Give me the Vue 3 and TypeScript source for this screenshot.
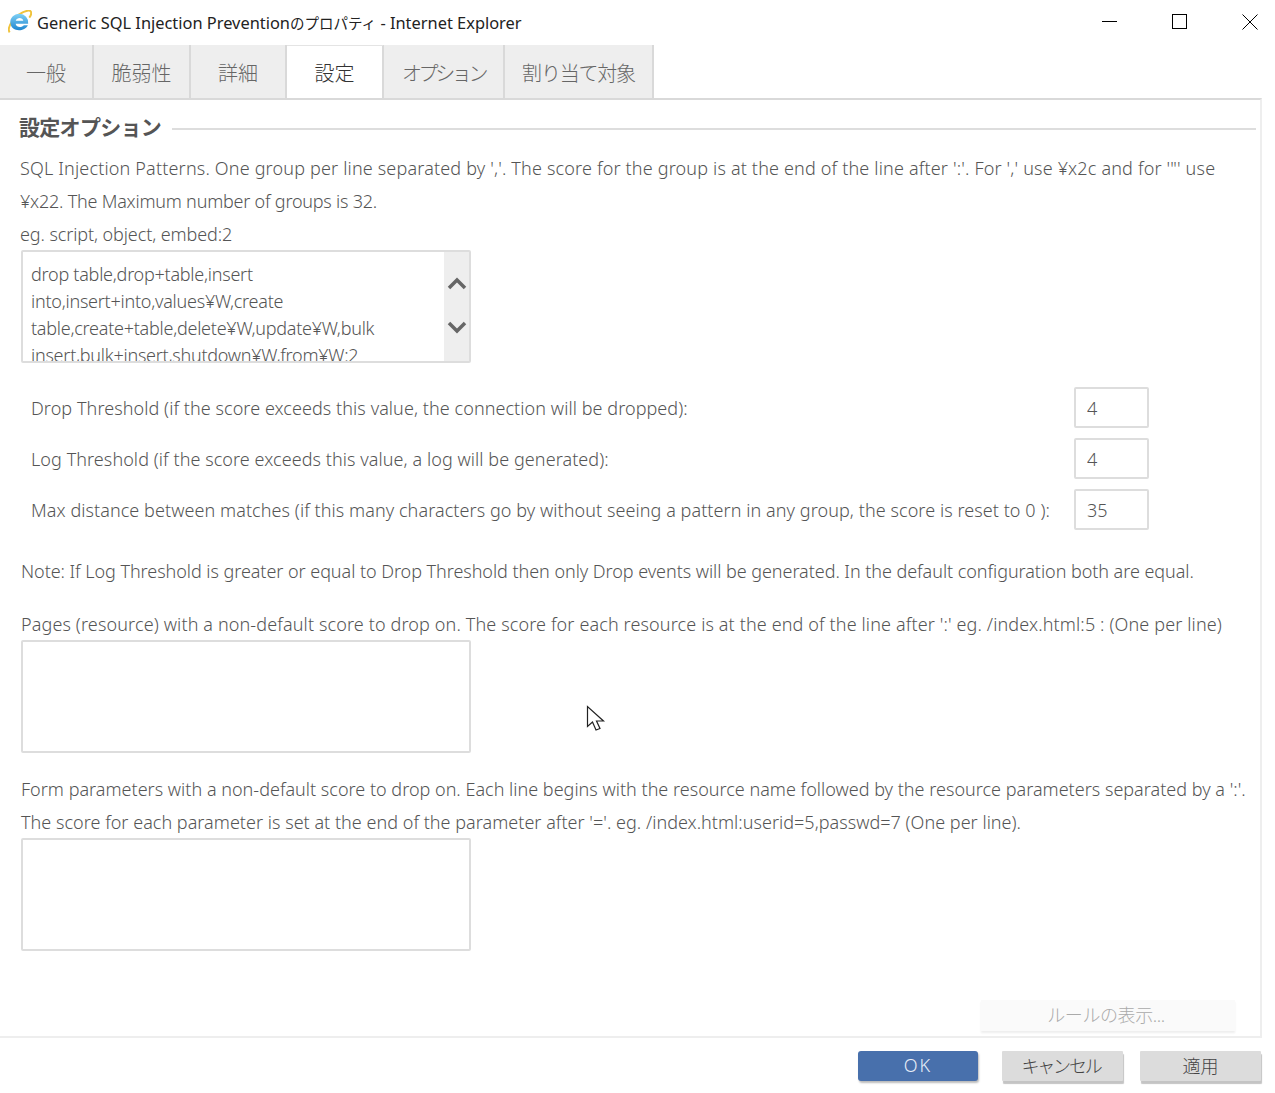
<script setup lang="ts">
const tabs = [
  { label: '一般', width: 94, tracking: 0 },
  { label: '脆弱性', width: 97, tracking: 0 },
  { label: '詳細', width: 96, tracking: 0 },
  { label: '設定', width: 97, tracking: 0 },
  { label: 'オプション', width: 121, tracking: -3.400 },
  { label: '割り当て対象', width: 149, tracking: -1.200 },
]
const thresholds = [
  { label: 'Drop Threshold (if the score exceeds this value, the connection will be dropped):', value: '4' },
  { label: 'Log Threshold (if the score exceeds this value, a log will be generated):', value: '4' },
  { label: 'Max distance between matches (if this many characters go by without seeing a pattern in any group, the score is reset to 0 ):', value: '35' },
]
</script>

<template>
  <div class="win">
    <header class="titlebar">
      <svg class="ie" viewBox="1.500 1 22 22" width="24" height="24">
        <defs>
          <linearGradient id="eg" x1="0" y1="0" x2="0" y2="1">
            <stop offset="0" stop-color="#7fd0f5" />
            <stop offset="1" stop-color="#1f86cf" />
          </linearGradient>
        </defs>
        <path d="M3 21.500 C0 17 8 4 20 1.500 C23.500 1 23.500 5 21 8" fill="none" stroke="#f0c33c" stroke-width="1.800" />
        <path d="M12 4.500a8 8 0 0 1 8 9h-11.500c.6 3.400 5.400 4 7.500 1.400h3.700c-3 6.500-15.200 6.500-16-1.900C3 8.500 7 4.500 12 4.500z M8.600 10.800h6.900c-.5-3.300-6-3.300-6.900 0z" fill="url(#eg)" fill-rule="evenodd" />
      </svg>
      <span class="title">Generic SQL Injection Prevention<span class="title-ja">のプロパティ</span> - Internet Explorer</span>
      <div class="controls">
        <svg width="16" height="16" viewBox="0 0 16 16"><path d="M0 7.500h15" stroke="#000" /></svg>
        <svg width="16" height="16" viewBox="0 0 16 16"><rect x=".5" y=".5" width="14" height="14" fill="none" stroke="#000" /></svg>
        <svg width="16" height="16" viewBox="0 0 16 16"><path d="M.5.500l15 15M15.500.500l-15 15" stroke="#000" /></svg>
      </div>
    </header>

    <nav class="tabs">
      <div
        v-for="(t, i) in tabs"
        :key="t.label"
        class="tab"
        :class="{ active: i === 3 }"
        :style="{ width: t.width + 'px', letterSpacing: t.tracking + 'px' }"
      >{{ t.label }}</div>
    </nav>

    <main class="panel">
      <div class="legend"><h2>設定オプション</h2><span class="rule"></span></div>

      <div class="first">
        <p class="text ls-wide">SQL Injection Patterns. One group per line separated by ','. The score for the group is at the end of the line after ':'. For ',' use ¥x2c and for '"' use</p>
        <p class="text ls-tight">¥x22. The Maximum number of groups is 32.</p>
        <p class="text">eg. script, object, embed:2</p>
      </div>

      <div class="area patterns">
        <div class="area-text">drop table,drop+table,insert<br>into,insert+into,values¥W,create<br>table,create+table,delete¥W,update¥W,bulk<br>insert,bulk+insert,shutdown¥W,from¥W:2</div>
        <div class="scroll">
          <svg width="20" height="14" viewBox="0 0 20 14"><path d="M2 12l8-8 8 8" fill="none" stroke="#666" stroke-width="3.500" /></svg>
          <svg width="20" height="14" viewBox="0 0 20 14"><path d="M2 2l8 8 8-8" fill="none" stroke="#666" stroke-width="3.500" /></svg>
        </div>
      </div>

      <div class="thresholds">
        <div v-for="t in thresholds" :key="t.label" class="th-row">
          <span>{{ t.label }}</span>
          <input class="num" :value="t.value" />
        </div>
      </div>

      <p class="text note">Note: If Log Threshold is greater or equal to Drop Threshold then only Drop events will be generated. In the default configuration both are equal.</p>

      <p class="text pages">Pages (resource) with a non-default score to drop on. The score for each resource is at the end of the line after ':' eg. /index.html:5 : (One per line)</p>
      <div class="area"></div>

      <div class="form">
        <p class="text ls-form1">Form parameters with a non-default score to drop on. Each line begins with the resource name followed by the resource parameters separated by a ':'.</p>
        <p class="text ls-form2">The score for each parameter is set at the end of the parameter after '='. eg. /index.html:userid=5,passwd=7 (One per line).</p>
      </div>
      <div class="area"></div>

      <div class="show-wrap"><button class="show" disabled>ルールの表示...</button></div>

      <svg class="cursor" width="20" height="30" viewBox="0 0 20 28">
        <path d="M1.500 1.500v20l5-4.500 3.500 8 4-1.500-3.500-7.500h7z" fill="#fff" stroke="#222" stroke-width="1.200" />
      </svg>
    </main>

    <footer class="footer">
      <button class="btn primary">OK</button>
      <button class="btn cancel">キャンセル</button>
      <button class="btn">適用</button>
    </footer>
  </div>
</template>

<style>
body { margin: 0; background: #fff; }
</style>

<style scoped>
.win {
  width: 1275px;
  height: 1093px;
  display: flex;
  flex-direction: column;
  overflow: hidden;
  background: #fff;
  font-family: "Noto Sans", "Noto Sans CJK JP", sans-serif;
  color: #555;
  font-size: 18px;
  font-weight: 300;
}
.titlebar {
  height: 45px;
  flex: none;
  display: flex;
  align-items: center;
  padding-left: 8px;
  box-sizing: border-box;
}
.ie { flex: none; margin-top: -2px; }
.title {
  margin-left: 5px;
  font-size: 16.400px;
  color: #222;
  font-weight: 400;
  white-space: nowrap;
  margin-top: -1px;
}
.title-ja {
  font-size: 14.500px;
}
.controls {
  margin-left: auto;
  display: flex;
  gap: 54px;
  padding-right: 17px;
  margin-top: -2px;
}
.tabs {
  height: 55px;
  flex: none;
  display: flex;
  box-sizing: border-box;
}
.tab {
  box-sizing: border-box;
  background: #eee;
  border-right: 2px solid #d9d9d9;
  display: flex;
  align-items: center;
  justify-content: center;
  font-size: 20px;
  color: #666;
  height: 55px;
  white-space: nowrap;
}
.tab.active {
  background: #fff;
  color: #333;
  border-top: 1px solid #e4e4e4;
  padding-bottom: 1px;
}
.panel {
  position: relative;
  flex: none;
  height: 940px;
  width: 1262px;
  box-sizing: border-box;
  margin-top: -2px;
  border-top: 2px solid #d9d9d9;
  border-right: 2px solid #eee;
  border-bottom: 2px solid #eee;
  padding: 0 4px 0 21px;
}
.legend {
  display: flex;
  align-items: center;
  height: 58px;
  margin-left: -2px;
  box-sizing: border-box;
}
.legend h2 {
  margin: 0 0 6px;
  font-size: 21px;
  letter-spacing: -0.700px;
  font-weight: 700;
  color: #555;
  white-space: nowrap;
}
.rule {
  flex: 1;
  height: 2px;
  background: #ddd;
  margin-left: 11px;
}
.text {
  margin: 0;
  line-height: 33px;
  white-space: nowrap;
  letter-spacing: -0.1px;
}
.first { margin-top: -6px; margin-left: -1px; margin-bottom: -1px; }
.ls-wide { letter-spacing: 0.170px; }
.ls-tight { letter-spacing: -0.220px; }
.ls-form1 { letter-spacing: 0.010px; }
.ls-form2 { letter-spacing: 0.025px; }
.area {
  box-sizing: border-box;
  width: 450px;
  height: 113px;
  border: 2px solid #ddd;
  border-radius: 2px;
  display: flex;
  overflow: hidden;
}
.area-text {
  flex: 1;
  padding: 9px 8px;
  line-height: 27px;
  white-space: nowrap;
  overflow: hidden;
  letter-spacing: -0.250px;
}
.scroll {
  width: 25px;
  flex: none;
  background: #eee;
  display: flex;
  flex-direction: column;
  align-items: center;
  gap: 31px;
  padding-top: 24px;
  box-sizing: border-box;
}
.thresholds {
  margin-top: 24px;
  display: flex;
  flex-direction: column;
  gap: 10px;
}
.th-row {
  display: flex;
  align-items: center;
  justify-content: space-between;
  height: 41px;
  padding-left: 10px;
  padding-right: 107px;
  white-space: nowrap;
  letter-spacing: 0.070px;
}
.num {
  box-sizing: border-box;
  width: 75px;
  height: 41px;
  border: 2px solid #ddd;
  border-radius: 2px;
  padding: 0 0 0 11px;
  font: inherit;
  color: #555;
  outline: none;
}
.note { margin-top: 25px; letter-spacing: -0.050px; }
.pages { margin-top: 20px; margin-bottom: -1px; letter-spacing: 0.130px; }
.form { margin-top: 20px; margin-bottom: -1px; }
.show-wrap {
  position: absolute;
  left: 981px;
  top: 900px;
}
.show {
  width: 254px;
  height: 31px;
  border: 0;
  background: #fafafa;
  box-shadow: 0 2px 2px #eee;
  color: #aaa;
  font: inherit;
  padding: 0 4px 3px 0;
  letter-spacing: -0.400px;
}
.cursor {
  position: absolute;
  left: 586px;
  top: 604px;
}
.footer {
  flex: 1;
  display: flex;
  align-items: flex-start;
  padding: 13px 14px 0 858px;
  box-sizing: border-box;
  gap: 17px;
}
.btn {
  width: 121px;
  height: 30px;
  border: 0;
  border-radius: 1px;
  background: #dcdcdc;
  box-shadow: 1px 3px 1px #c4c4c4;
  color: #444;
  font: inherit;
  padding: 0 0 3px;
}
.cancel { letter-spacing: -2.200px; padding-right: 3px; }
.primary {
  width: 120px;
  background: #4870ac;
  color: #e8eef8;
  border-radius: 3px;
  margin-right: 7px;
  box-shadow: 1px 2px 2px #bbb;
  letter-spacing: 2px;
}
</style>
